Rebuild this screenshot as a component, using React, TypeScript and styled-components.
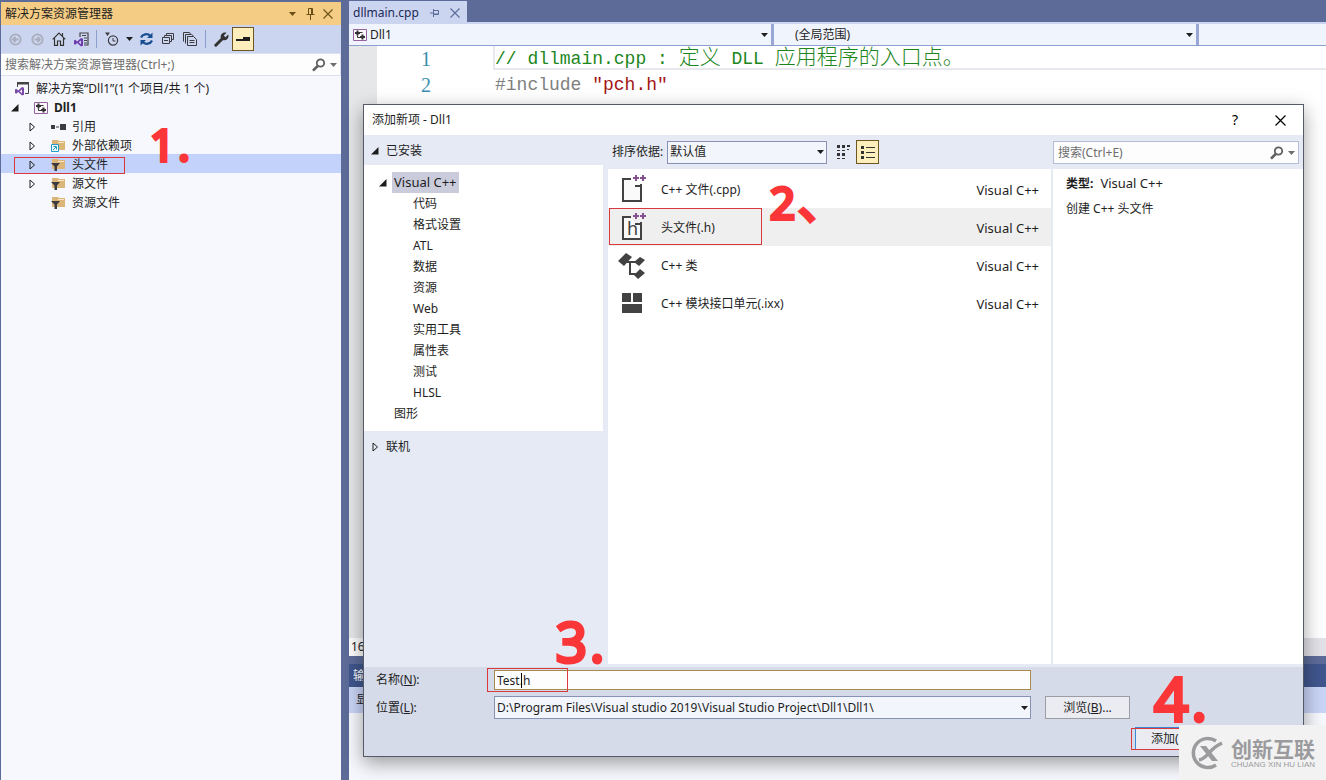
import React from "react";
import styled, { createGlobalStyle, css } from "styled-components";

const ui = `"Noto Sans", "Noto Sans CJK SC", sans-serif`;
const ink = "#1e1e1e";

const GlobalStyle = createGlobalStyle`
  * { box-sizing: border-box; }
  body { margin: 0; background: #5d6b99; color: ${ink}; font: 12px/18px ${ui}; overflow: hidden; }
  button, input, select { font: inherit; color: inherit; }
  button { padding: 0; border: 0; background: none; }
  ul { margin: 0; padding: 0; list-style: none; }
  svg { display: block; flex: none; }
`;

const redFrame = css`
  position: absolute;
  border: 1px solid #d9393c;
  pointer-events: none;
`;

const Desktop = styled.div`
  position: relative;
  display: grid;
  grid-template-columns: 340px minmax(0, 1fr);
  column-gap: 8px;
  min-height: 100vh;
  padding-left: 1px;
`;

/* Solution explorer */
const Explorer = styled.aside`
  display: flex;
  flex-direction: column;
  margin-top: 2px;
  background: #f6f8fd;
`;
const ExplorerTitle = styled.header`
  display: flex;
  align-items: center;
  height: 23px;
  padding: 0 4px;
  background: #f5cc84;
`;
const TitleText = styled.h2`
  flex: 1;
  margin: 0;
  font-size: 12px;
  font-weight: 400;
`;
const TitleButton = styled.button`
  display: grid;
  place-items: center;
  width: 18px;
  height: 18px;
  color: #6b4f16;
`;
const Toolbar = styled.div`
  display: flex;
  align-items: center;
  height: 28px;
  padding-left: 3px;
  background: #ccd5f0;
`;
const Tool = styled.button<{ $on?: boolean; $w?: number }>`
  display: grid;
  place-items: center;
  width: ${(p) => p.$w ?? 22}px;
  height: ${(p) => (p.$on ? 24 : 22)}px;
  border: ${(p) => (p.$on ? "1px solid #6f5522" : "0")};
  background: ${(p) => (p.$on ? "#fdeebb" : "transparent")};
`;
const Divider = styled.span`
  width: 1px;
  height: 18px;
  margin: 0 4px;
  background: #8f9fcc;
`;
const SearchBox = styled.div<{ $inDialog?: boolean }>`
  display: flex;
  align-items: center;
  gap: 4px;
  height: 23px;
  padding: 0 3px 0 4px;
  border: 1px solid ${(p) => (p.$inDialog ? "#b4bdd6" : "#dbe1f0")};
  background: #fdfdfe;
  color: #6d6d6d;
  ${(p) => !p.$inDialog && "border-left: 0;"}
`;
const SearchInput = styled.input`
  flex: 1;
  min-width: 0;
  padding: 0;
  border: 0;
  outline: 0;
  background: transparent;
  &::placeholder { color: #6d6d6d; opacity: 1; }
`;
const SolutionTree = styled.ul`
  padding-top: 2px;
`;
const Node = styled.li<{ $level: number; $selected?: boolean }>`
  position: relative;
  display: flex;
  align-items: center;
  gap: 6px;
  height: 19px;
  padding-top: 2px;
  padding-left: ${(p) => [14, 8, 25][p.$level]}px;
  background: ${(p) => (p.$selected ? "#c2d2fb" : "transparent")};
`;
const NodeFrame = styled.span`
  ${redFrame}
  left: 13px;
  top: 3px;
  width: 111px;
  height: 17px;
`;
const Twisty = styled.button<{ $gap: number }>`
  display: grid;
  place-items: center;
  width: 12px;
  height: 16px;
  margin-right: ${(p) => p.$gap}px;
`;

/* Editor */
const Editor = styled.main`
  display: flex;
  flex-direction: column;
  min-width: 0;
`;
const Tabs = styled.div`
  display: flex;
  height: 24px;
  padding-top: 1px;
  border-bottom: 2px solid #ccd5f0;
`;
const Tab = styled.div`
  display: flex;
  align-items: center;
  gap: 11px;
  width: 118px;
  padding: 2px 6px 0 4px;
  background: #ccd5f0;
  color: #1b2a57;
`;
const TabButton = styled.button`
  color: #5b6b9c;
`;
const NavBar = styled.div`
  display: grid;
  grid-template-columns: 422px 422px minmax(0, 1fr);
  column-gap: 3px;
  height: 22px;
  border-bottom: 1px solid #8f9fcf;
  background: #98a7d6;
`;
const NavSelect = styled.div`
  display: flex;
  align-items: center;
  gap: 3px;
  padding: 0 3px 0 4px;
  background: #f0f4fc;
`;
const Select = styled.select`
  flex: 1;
  min-width: 0;
  height: 20px;
  padding: 0;
  border: 0;
  outline: 0;
  appearance: none;
  background: transparent;
`;
const ScopeSelect = styled(Select)`
  padding-left: 17px;
`;
const CodeArea = styled.div`
  display: grid;
  grid-template-columns: 28px 54px minmax(0, 1fr);
  flex: 1;
  background: #fff;
`;
const Margin = styled.div`
  background: #e6e7e8;
`;
const LineNumbers = styled.div`
  color: #3a8fae;
  font: 20px/26px "Liberation Serif", serif;
  text-align: right;
`;
const Code = styled.pre`
  margin: 0 0 0 63px;
  font: 18px/26px "Liberation Mono", "Noto Sans CJK SC", monospace;
`;
const CodeLine = styled.div<{ $current?: boolean }>`
  display: flex;
  align-items: baseline;
  height: ${(p) => (p.$current ? 24 : 28)}px;
  padding-left: 1px;
  line-height: ${(p) => (p.$current ? 16 : 30)}px;
  ${(p) => p.$current && "border: 2px solid #e8e8ee; border-top-width: 0; border-right: 0; padding-left: 0; margin-left: -1px;"}
`;
const Token = styled.span<{ $color: string; $cjk?: boolean }>`
  color: ${(p) => p.$color};
  ${(p) => p.$cjk && `font: 300 21px/18px "Noto Sans CJK SC", sans-serif;`}
`;
const ZoomBar = styled.div`
  height: 18px;
  background: #e2e2e8;
`;
const ZoomValue = styled.div`
  width: 60px;
  padding-left: 2px;
  background: #fdfdfe;
`;
const Output = styled.section`
  height: 116px;
  margin-top: 8px;
  background: #f6f8fd;
`;
const OutputTitle = styled.h2`
  margin: 0;
  padding: 3px 4px;
  height: 23px;
  background: #40568d;
  color: #fff;
  font-size: 12px;
  font-weight: 400;
  line-height: 18px;
`;
const OutputBar = styled.div`
  height: 26px;
  padding: 4px 7px;
  background: #c9d4f6;
`;

/* Add new item dialog */
const Dialog = styled.section`
  position: absolute;
  inset: 104px 22px 23px 363px;
  display: flex;
  flex-direction: column;
  border: 1px solid #555b68;
  background: #e6eaf5;
  box-shadow: 0 6px 18px rgba(0, 0, 0, 0.38);
`;
const DialogTitle = styled.header`
  display: flex;
  align-items: center;
  height: 30px;
  padding: 0 14px 0 8px;
  background: #fff;
`;
const CaptionButton = styled.button`
  display: grid;
  place-items: center;
  width: 18px;
  height: 18px;
  margin-left: 27px;
  color: #000;
  font-size: 14px;
`;
const DialogBody = styled.div`
  display: grid;
  grid-template-columns: 239px minmax(0, 1fr) 250px;
  flex: 1;
`;
const Column = styled.div`
  display: flex;
  flex-direction: column;
  min-width: 0;
`;
const GroupHead = styled.button`
  display: flex;
  align-items: center;
  gap: 7px;
  height: 30px;
  padding: 1px 0 0 7px;
`;
const Categories = styled.ul`
  padding: 7px 0 7px 15px;
  background: #fff;
`;
const Category = styled.li<{ $level: number }>`
  display: flex;
  align-items: center;
  height: 21px;
  padding-left: ${(p) => [0, 13, 32][p.$level]}px;
`;
const CategoryName = styled.span<{ $selected?: boolean }>`
  padding: 1px 2px;
  line-height: 19px;
  ${(p) => p.$selected && "margin-left: 5px; background: #cacbdb; font-size: 13px;"}
`;
const SortBar = styled.div`
  display: flex;
  align-items: center;
  height: 34px;
  padding-left: 9px;
`;
const Combo = styled.div<{ $w?: number }>`
  display: flex;
  align-items: center;
  ${(p) => (p.$w ? `width: ${p.$w}px;` : "flex: 1;")}
  height: 23px;
  padding: 0 2px;
  border: 1px solid #8591b5;
  background: #f2f5fc;
`;
const SortCombo = styled(Combo)`
  margin: 0 5px 0 4px;
`;
const Templates = styled.ul`
  flex: 1;
  margin: 0 2px 0 5px;
  padding-top: 1px;
  background: #fff;
`;
const Template = styled.li<{ $selected?: boolean }>`
  position: relative;
  display: flex;
  align-items: center;
  height: 38px;
  padding: 1px 12px 0 8px;
  background: ${(p) => (p.$selected ? "#efefef" : "transparent")};
`;
const TemplateName = styled.span`
  flex: 1;
  margin-left: 13px;
`;
const Language = styled.span`
  font-size: 13px;
`;
const TemplateFrame = styled.span`
  ${redFrame}
  left: 1px;
  top: 0;
  width: 153px;
  height: 37px;
`;
const InfoSearch = styled.div`
  height: 34px;
  padding: 6px 4px 0 0;
`;
const Info = styled.div`
  flex: 1;
  margin-left: -2px;
  padding: 5px 13px;
  border-left: 2px solid #e6eaf3;
  background: #fff;
`;
const InfoLine = styled.p`
  margin: 0 0 7px;
`;
const InfoLabel = styled.strong`
  margin-right: 7px;
  font-weight: 700;
`;
const DialogFooter = styled.footer`
  display: grid;
  grid-template-columns: 104px minmax(0, 1fr) 85px;
  column-gap: 14px;
  row-gap: 6px;
  align-items: center;
  align-content: start;
  height: 89px;
  margin-top: 3px;
  padding: 3px 173px 0 12px;
  background: #d6dbe9;
`;
const FieldLabel = styled.label`
  margin-right: -14px;
`;
const NameField = styled.div`
  position: relative;
  display: flex;
`;
const NameInput = styled.input`
  flex: 1;
  height: 20px;
  padding: 0 2px;
  border: 1px solid #a58a4a;
  outline: 0;
  background: #fdfdfe;
`;
const NameFrame = styled.span`
  ${redFrame}
  left: -7px;
  top: -2px;
  width: 81px;
  height: 24px;
`;
const Caret = styled.span`
  position: absolute;
  left: 27px;
  top: 3px;
  width: 1px;
  height: 15px;
  background: #000;
`;
const PushButton = styled.button`
  height: 23px;
  border: 1px solid #9c9da4;
  background: #ebecf1;
`;
const AddSlot = styled.div`
  position: relative;
  grid-column: 3;
  width: 85px;
  margin: 2px 0 0 90px;
`;
const AddButton = styled(PushButton)`
  width: 85px;
  padding-left: 15px;
  border-color: #3c87d6;
  text-align: left;
`;
const AddFrame = styled.span`
  ${redFrame}
  left: -4px;
  top: 1px;
  width: 92px;
  height: 22px;
`;
const FieldRow = styled.div`
  display: contents;
`;

/* Red pen marks lie over the windows */
const Mark = styled.span<{ $x: number; $y: number; $size: number }>`
  position: absolute;
  left: ${(p) => p.$x}px;
  top: ${(p) => p.$y}px;
  display: flex;
  gap: 3px;
  color: #fb3638;
  font: 400 ${(p) => p.$size}px/1 "Open Sans", "Noto Sans CJK SC", sans-serif;
  -webkit-text-stroke: 4px #fb3638;
  pointer-events: none;
`;
const Watermark = styled.div`
  position: absolute;
  right: 0;
  bottom: 0;
  display: flex;
  align-items: center;
  gap: 7px;
  width: 147px;
  height: 55px;
  padding-left: 11px;
  background: #f2f2f3;
  color: #9b9b9d;
`;
const Brand = styled.div`
  font: 700 21px/23px "Noto Sans CJK SC", sans-serif;
`;
const BrandLatin = styled.div`
  font: 8px/9px "Liberation Sans", sans-serif;
  white-space: nowrap;
`;

const Down = ({ color = "#1e1e1e" }: { color?: string }) => (
  <svg width="7" height="4" viewBox="0 0 7 4"><path d="M0 0h7L3.500 4z" fill={color} /></svg>
);
const Opened = () => (
  <svg width="8" height="8" viewBox="0 0 8 8"><path d="M7.500 0v7.500H0z" fill="#1e1e1e" /></svg>
);
const Closed = () => (
  <svg width="8" height="10" viewBox="0 0 8 10"><path d="M2 1v8l4.500-4z" fill="none" stroke="#1e1e1e" /></svg>
);
const Cross = ({ size = 10 }: { size?: number }) => (
  <svg width={size} height={size} viewBox="0 0 10 10"><path d="M.5.5l9 9m0-9l-9 9" stroke="currentColor" strokeWidth="1.1" /></svg>
);
const Magnifier = () => (
  <svg width="14" height="14" viewBox="0 0 14 14" fill="none" stroke="#5f5f62">
    <circle cx="8.500" cy="5" r="3.700" strokeWidth="1.800" /><path d="M5.700 8L1 12.700" strokeWidth="2.600" />
  </svg>
);
const Pin = () => (
  <svg width="9" height="12" viewBox="0 0 9 12" fill="none" stroke="currentColor"><path d="M2.500 6.500v-6h4v6M5.500.5v6M.5 6.500h8M4.500 7v5" /></svg>
);
const PinSide = () => (
  <svg width="9" height="8" viewBox="0 0 9 8" fill="none" stroke="currentColor"><path d="M0 4h3M3.500 0v8M3.500 1.500h5v4h-5M4 5h4" /></svg>
);
const Circled = ({ back }: { back?: boolean }) => (
  <svg width="13" height="13" viewBox="0 0 13 13" fill="none" stroke="#a9aebd" strokeWidth="1.800">
    <circle cx="6.500" cy="6.500" r="5.200" />
    <path d={back ? "M9.500 6.500h-5M6.500 4L4 6.500 6.500 9" : "M3.500 6.500h5M6.500 4L9 6.500 6.500 9"} />
  </svg>
);
const House = () => (
  <svg width="14" height="14" viewBox="0 0 14 14" fill="none" stroke="#333" strokeWidth="1.200">
    <path d="M.7 7.300L7 1l6.300 6.300M2.500 6v7.300h3V9h3v4.300h3V6M10.500 1v3" />
  </svg>
);
const VsGlyph = "M0 8.500l1.200-.7 2 1.600L7 6l2 .8v7L7 14.600l-3.800-3.500-2 1.600L0 12zM7 8.500l-2.300 1.800L7 12.200z";
const VsDoc = () => (
  <svg width="15" height="15" viewBox="0 0 15 15">
    <path d="M6 5V1h8v12h-4M8 3.500h4M10 6h3M10 8.500h3M10 11h3" fill="none" stroke="#444" strokeWidth="1.200" />
    <path d={VsGlyph} fill="#6f3cae" fillRule="evenodd" />
  </svg>
);
const SolutionIcon = () => (
  <svg width="15" height="15" viewBox="0 0 15 15">
    <path d="M2.500 6V1.500h11v11H10" fill="none" stroke="#444" /><path d="M2 1h12v2.500H2z" fill="#444" />
    <path d={VsGlyph} fill="#7a4aa8" fillRule="evenodd" />
  </svg>
);
const Project = () => (
  <svg width="14" height="12" viewBox="0 0 14 12">
    <path d="M.5.5h13v11H.5z" fill="#fbf7fc" stroke="#9563a0" />
    <path d="M2 4h5M4.500 1.500v5M7 8h5M9.500 5.500v5" fill="none" stroke="#333" strokeWidth="2" />
    <path d="M4.500 6.500v2H7M7 3.500h2.500" fill="none" stroke="#333" />
  </svg>
);
const Clock = () => (
  <svg width="14" height="14" viewBox="0 0 14 14" fill="none" stroke="#3b3b40">
    <circle cx="8" cy="8.500" r="4.600" strokeWidth="1.200" /><path d="M8 6v3h2.500" /><path d="M0 .5h5L2.500 4z" fill="#3b3b40" stroke="none" />
  </svg>
);
const Refresh = () => (
  <svg width="15" height="14" viewBox="0 0 14 14" fill="none" stroke="#174e91" strokeWidth="2.200">
    <path d="M1.500 5.500C3 2 8 1 11 4M12.500 8.500C11 12 6 13 3 10" /><path d="M13 .5V6H7.500zM1 13.500V8h5.500z" fill="#174e91" stroke="none" />
  </svg>
);
const Collapse = () => (
  <svg width="12" height="12" viewBox="0 0 12 12" fill="none" stroke="#3b3b40"><path d="M.5 4.500h7v6h-7zM2 7.500h4M2.500 4V2.500h7v6H8M4.500 2V.5h7v6H10" /></svg>
);
const Files = () => (
  <svg width="14" height="14" viewBox="0 0 14 14" fill="none" stroke="#3b3b40"><path d="M4.500 4.500h6l3 3v6h-9zM6.500 8.500h5M6.500 10.500h5M2.500 11.500v-9h6l2 1.500M.5 9.500v-9h6l1 1.500" /></svg>
);
const WrenchIcon = () => (
  <svg width="15" height="15" viewBox="0 0 15 15"><path d="M1.800 13.200L8 7" stroke="#333" strokeWidth="3" strokeLinecap="round" /><path d="M12.600.8L9.800 3.600l1.600 1.600L14.200 2.400C15.500 6 12.500 9.500 8.500 8L7 6.500C5.500 2.500 9-.5 12.600.8z" fill="#333" /></svg>
);
const Preview = () => (
  <svg width="14" height="6" viewBox="0 0 14 6"><path d="M0 3h7V1h7v4H0z" fill="#1e1e1e" /></svg>
);
const References = () => (
  <svg width="15" height="8" viewBox="0 0 15 8"><path d="M0 2h4v4H0zM5 3.500h3v1H5zM9 1h6v6H9z" fill="#3b3b40" /></svg>
);
const Folder = ({ kind }: { kind: "filter" | "link" }) => (
  <svg width="15" height="13" viewBox="0 0 15 13">
    <path d="M1 1h6l1 1h6v9H1z" fill="#dcb679" /><path d="M7 3h6v1H7z" fill="#f6e6c5" />
    {kind === "filter" ? (
      <path d="M0 5h9L6 8.500V13H3.500V8.500z" fill="#3b3b40" />
    ) : (
      <><path d="M.5 5.500h7v7h-7z" fill="#eef9fd" stroke="#269bc4" /><path d="M2.500 7.500H5.500v3M5 8l-3 3" stroke="#269bc4" fill="none" /></>
    )}
  </svg>
);
const Tiles = () => (
  <svg width="14" height="14" viewBox="0 0 14 14" fill="#333"><path d="M0 0h3v3H0zM5 0h3v3H5zM10 0h3v2h-3zM0 5h3v1H0zM5 5h3v1H5zM10 4h2v1h-2zM0 8h3v3H0zM5 8h3v3H5zM0 13h3v1H0zM5 13h3v1H5z" /></svg>
);
const ListGlyph = () => (
  <svg width="14" height="13" viewBox="0 0 14 13" fill="#333"><path d="M0 0h3v3H0zM0 5h3v3H0zM0 10h3v3H0zM5 1h9v1H5zM5 6h9v1H5zM5 11h9v1H5z" /></svg>
);
const FileIcon = ({ h }: { h?: boolean }) => (
  <svg width="32" height="32" viewBox="0 0 32 32">
    <path d="M15 5H7v22h18V12h-6M25 12v-2" fill="#fafafa" stroke="#424242" strokeWidth="2" />
    <path d="M17 4h6M20 1v6M24 4h6M27 1v6" stroke="#85508f" strokeWidth="2" />
    {h && <text x="11" y="23" fontFamily="Noto Sans" fontSize="18" fill="#424242">h</text>}
  </svg>
);
const ClassIcon = () => (
  <svg width="32" height="32" viewBox="0 0 32 32">
    <path d="M2 11l8-8 6 4-8 9zM18 12l5 4 6-6-5-3zM18 25l4 4 7-6-5-4z" fill="#424242" />
    <path d="M11 12h10M14 12v12h7" fill="none" stroke="#424242" strokeWidth="2" />
  </svg>
);
const ModuleIcon = () => (
  <svg width="32" height="32" viewBox="0 0 32 32"><path d="M6 5h9v9H6zM17 5h9v9h-9zM6 16h20v9H6z" fill="#424242" /></svg>
);
const Logo = () => (
  <svg width="34" height="34" viewBox="0 0 34 34" fill="none" stroke="#9b9b9d">
    <path d="M26 5A14.500 14.500 0 1 0 26 29" strokeWidth="3.500" />
    <path d="M10 10h6l12 15h-6z" fill="#9b9b9d" stroke="none" />
    <path d="M32 7Q24 11 19 17T9 24" strokeWidth="3.500" />
  </svg>
);

const folders = [
  { name: "引用", icon: <References />, open: true },
  { name: "外部依赖项", icon: <Folder kind="link" />, open: true },
  { name: "头文件", icon: <Folder kind="filter" />, open: true, selected: true },
  { name: "源文件", icon: <Folder kind="filter" />, open: true },
  { name: "资源文件", icon: <Folder kind="filter" />, open: false },
];
const categories = ["代码", "格式设置", "ATL", "数据", "资源", "Web", "实用工具", "属性表", "测试", "HLSL"];
const templates = [
  { name: "C++ 文件(.cpp)", icon: <FileIcon /> },
  { name: "头文件(.h)", icon: <FileIcon h />, selected: true },
  { name: "C++ 类", icon: <ClassIcon /> },
  { name: "C++ 模块接口单元(.ixx)", icon: <ModuleIcon /> },
];

export default function App() {
  return (
    <Desktop>
      <GlobalStyle />
      <Explorer>
        <ExplorerTitle>
          <TitleText>解决方案资源管理器</TitleText>
          <TitleButton aria-label="选项"><Down color="#6b4f16" /></TitleButton>
          <TitleButton aria-label="固定"><Pin /></TitleButton>
          <TitleButton aria-label="关闭"><Cross /></TitleButton>
        </ExplorerTitle>
        <Toolbar>
          <Tool aria-label="后退"><Circled back /></Tool>
          <Tool aria-label="前进"><Circled /></Tool>
          <Tool aria-label="主页"><House /></Tool>
          <Tool aria-label="切换视图"><VsDoc /></Tool>
          <Divider />
          <Tool aria-label="挂起的更改"><Clock /></Tool>
          <Tool aria-label="筛选选项" $w={12}><Down /></Tool>
          <Tool aria-label="同步"><Refresh /></Tool>
          <Tool aria-label="全部折叠"><Collapse /></Tool>
          <Tool aria-label="显示所有文件"><Files /></Tool>
          <Divider />
          <Tool aria-label="属性"><WrenchIcon /></Tool>
          <Tool aria-label="预览" $on><Preview /></Tool>
        </Toolbar>
        <SearchBox>
          <SearchInput aria-label="搜索解决方案" placeholder="搜索解决方案资源管理器(Ctrl+;)" />
          <Magnifier /><Down color="#6d6d6d" />
        </SearchBox>
        <SolutionTree>
          <Node $level={0}><SolutionIcon />解决方案“Dll1”(1 个项目/共 1 个)</Node>
          <Node $level={1}>
            <Twisty $gap={7} aria-label="折叠"><Opened /></Twisty><Project /><strong>Dll1</strong>
          </Node>
          {folders.map((f) => (
            <Node key={f.name} $level={2} $selected={f.selected}>
              <Twisty $gap={7} aria-label={`展开${f.name}`}>{f.open && <Closed />}</Twisty>
              {f.icon}{f.name}
              {f.selected && <NodeFrame />}
            </Node>
          ))}
        </SolutionTree>
      </Explorer>

      <Editor>
        <Tabs>
          <Tab>
            dllmain.cpp
            <TabButton aria-label="固定选项卡"><PinSide /></TabButton>
            <TabButton aria-label="关闭选项卡"><Cross /></TabButton>
          </Tab>
        </Tabs>
        <NavBar>
          <NavSelect><Project /><Select aria-label="项目"><option>Dll1</option></Select><Down /></NavSelect>
          <NavSelect><ScopeSelect aria-label="范围"><option>(全局范围)</option></ScopeSelect><Down /></NavSelect>
          <NavSelect />
        </NavBar>
        <CodeArea>
          <Margin />
          <LineNumbers>1<br />2</LineNumbers>
          <Code>
            <CodeLine $current>
              <Token $color="#1d861d">{"// dllmain.cpp : "}</Token>
              <Token $color="#1d861d" $cjk>定义</Token>
              <Token $color="#1d861d">{" DLL "}</Token>
              <Token $color="#1d861d" $cjk>应用程序的入口点。</Token>
            </CodeLine>
            <CodeLine>
              <Token $color="#808080">{"#include "}</Token>
              <Token $color="#a31515">"pch.h"</Token>
            </CodeLine>
          </Code>
        </CodeArea>
        <ZoomBar><ZoomValue>161 %</ZoomValue></ZoomBar>
        <Output>
          <OutputTitle>输出</OutputTitle>
          <OutputBar>显示输出来源</OutputBar>
        </Output>
      </Editor>

      <Dialog role="dialog" aria-label="添加新项 - Dll1">
        <DialogTitle>
          <TitleText>添加新项 - Dll1</TitleText>
          <CaptionButton aria-label="帮助">?</CaptionButton>
          <CaptionButton aria-label="关闭"><Cross size={11} /></CaptionButton>
        </DialogTitle>
        <DialogBody>
          <Column>
            <GroupHead><Opened />已安装</GroupHead>
            <Categories>
              <Category $level={0}><Opened /><CategoryName $selected>Visual C++</CategoryName></Category>
              {categories.map((c) => (
                <Category key={c} $level={2}><CategoryName>{c}</CategoryName></Category>
              ))}
              <Category $level={1}><CategoryName>图形</CategoryName></Category>
            </Categories>
            <GroupHead><Closed />联机</GroupHead>
          </Column>
          <Column>
            <SortBar>
              <label htmlFor="sort">排序依据:</label>
              <SortCombo $w={160}><Select id="sort"><option>默认值</option></Select><Down /></SortCombo>
              <Tool aria-label="小图标" $w={24}><Tiles /></Tool>
              <Tool aria-label="列表" $on $w={23}><ListGlyph /></Tool>
            </SortBar>
            <Templates>
              {templates.map((t) => (
                <Template key={t.name} $selected={t.selected}>
                  {t.icon}
                  <TemplateName>{t.name}</TemplateName>
                  <Language>Visual C++</Language>
                  {t.selected && <TemplateFrame />}
                </Template>
              ))}
            </Templates>
          </Column>
          <Column>
            <InfoSearch>
              <SearchBox $inDialog>
                <SearchInput aria-label="搜索模板" placeholder="搜索(Ctrl+E)" />
                <Magnifier /><Down color="#6d6d6d" />
              </SearchBox>
            </InfoSearch>
            <Info>
              <InfoLine><InfoLabel>类型:</InfoLabel><Language>Visual C++</Language></InfoLine>
              <InfoLine>创建 C++ 头文件</InfoLine>
            </Info>
          </Column>
        </DialogBody>
        <DialogFooter>
          <FieldRow>
            <FieldLabel htmlFor="name">名称(<u>N</u>):</FieldLabel>
            <NameField><NameInput id="name" defaultValue="Test.h" /><Caret /><NameFrame /></NameField>
            <span />
          </FieldRow>
          <FieldRow>
            <FieldLabel htmlFor="location">位置(<u>L</u>):</FieldLabel>
            <Combo>
              <Select id="location"><option>D:\Program Files\Visual studio 2019\Visual Studio Project\Dll1\Dll1\</option></Select>
              <Down />
            </Combo>
            <PushButton>浏览(<u>B</u>)...</PushButton>
          </FieldRow>
          <AddSlot><AddButton>添加(</AddButton><AddFrame /></AddSlot>
        </DialogFooter>
      </Dialog>

      <Mark $x={150} $y={122} $size={44}><span>1</span><span>.</span></Mark>
      <Mark $x={770} $y={180} $size={44}><span>2</span><span>、</span></Mark>
      <Mark $x={556} $y={614} $size={54}><span>3</span><span>.</span></Mark>
      <Mark $x={1154} $y={668} $size={60}><span>4</span><span>.</span></Mark>
      <Watermark>
        <Logo />
        <div><Brand>创新互联</Brand><BrandLatin>CHUANG XIN HU LIAN</BrandLatin></div>
      </Watermark>
    </Desktop>
  );
}
